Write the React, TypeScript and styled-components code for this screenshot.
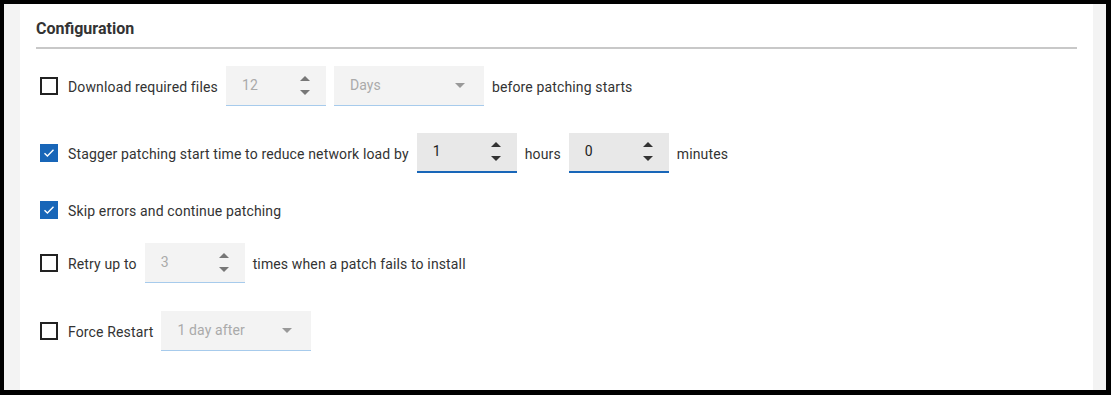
import styled, { createGlobalStyle } from 'styled-components';

const GlobalStyle = createGlobalStyle`
  html, body {
    margin: 0;
    padding: 0;
    background: #000;
  }
  body {
    font-family: Roboto, "Liberation Sans", Arial, sans-serif;
    color: #333;
  }
`;

const StyledFrame = styled.div`
  margin: 4px 5px 5px 4px;
  height: 386px;
  background: #f3f3f3;
  padding: 0 13px 0 16px;
  box-sizing: border-box;
`;

const StyledCard = styled.div`
  height: 100%;
  background: #fff;
  padding: 14px 16px 0 16px;
  box-sizing: border-box;
`;

const StyledTitle = styled.h2`
  margin: 0;
  font-size: 16px;
  line-height: 22px;
  font-weight: 700;
  color: #333;
  padding-bottom: 7px;
  border-bottom: 2px solid #c8c8c8;
`;

const StyledList = styled.div`
  display: flex;
  flex-direction: column;
  padding-left: 4px;
`;

const StyledRow = styled.div<{ $top: number; $height: number }>`
  display: flex;
  align-items: center;
  gap: 8px;
  margin-top: ${(p) => p.$top}px;
  height: ${(p) => p.$height}px;
  font-size: 14px;
  letter-spacing: 0.14px;
  color: #333;
`;

const StyledCheckbox = styled.span<{ $checked: boolean }>`
  width: 18px;
  height: 18px;
  box-sizing: border-box;
  margin-right: 2px;
  flex-shrink: 0;
  display: flex;
  align-items: center;
  justify-content: center;
  border: ${(p) => (p.$checked ? 'none' : '2px solid #222')};
  background: ${(p) => (p.$checked ? '#1866b8' : '#fff')};
`;

const StyledLabel = styled.span`
  white-space: nowrap;
  margin-top: 1px;
`;

const StyledField = styled.div<{ $disabled: boolean; $width: number }>`
  width: ${(p) => p.$width}px;
  height: 40px;
  box-sizing: border-box;
  display: flex;
  align-items: center;
  justify-content: space-between;
  padding: 0 16px;
  background: ${(p) => (p.$disabled ? '#f3f3f3' : '#e8e8e8')};
  border-bottom: ${(p) => (p.$disabled ? '1px solid #a7cbec' : '2px solid #1866b8')};
  color: ${(p) => (p.$disabled ? '#aaa' : '#222')};
  font-size: 14px;
`;

const StyledValue = styled.span`
  margin-top: -2px;
`;

const StyledSpinner = styled.div<{ $disabled: boolean }>`
  display: flex;
  flex-direction: column;
  gap: 9px;
  margin-top: -1px;
  color: ${(p) => (p.$disabled ? '#777' : '#333')};
`;

const StyledArrow = styled.div<{ $disabled: boolean }>`
  margin-right: 3px;
  color: ${(p) => (p.$disabled ? '#999' : '#555')};
`;

const Check = () => (
  <svg width="12" height="10" viewBox="0 0 12 10">
    <path d="M1.5 5.2 L4.4 8 L10.5 1.8" fill="none" stroke="#fff" strokeWidth="1.4" />
  </svg>
);

const Triangle = ({ up }: { up?: boolean }) => (
  <svg width="10" height="5" viewBox="0 0 10 5" style={{ display: 'block' }}>
    <path d={up ? 'M0 5 L5 0 L10 5 Z' : 'M0 0 L5 5 L10 0 Z'} fill="currentColor" />
  </svg>
);

const Checkbox = ({ checked }: { checked: boolean }) => (
  <StyledCheckbox $checked={checked}>{checked && <Check />}</StyledCheckbox>
);

const NumberField = ({ value, disabled }: { value: string; disabled: boolean }) => (
  <StyledField $disabled={disabled} $width={100}>
    <StyledValue>{value}</StyledValue>
    <StyledSpinner $disabled={disabled}>
      <Triangle up />
      <Triangle />
    </StyledSpinner>
  </StyledField>
);

const SelectField = ({ value, disabled }: { value: string; disabled: boolean }) => (
  <StyledField $disabled={disabled} $width={150}>
    <StyledValue>{value}</StyledValue>
    <StyledArrow $disabled={disabled}>
      <Triangle />
    </StyledArrow>
  </StyledField>
);

const App = () => (
  <>
    <GlobalStyle />
    <StyledFrame>
      <StyledCard>
        <StyledTitle>Configuration</StyledTitle>
        <StyledList>
          <StyledRow $top={17} $height={40}>
            <Checkbox checked={false} />
            <StyledLabel>Download required files</StyledLabel>
            <NumberField value="12" disabled />
            <SelectField value="Days" disabled />
            <StyledLabel>before patching starts</StyledLabel>
          </StyledRow>
          <StyledRow $top={27} $height={40}>
            <Checkbox checked />
            <StyledLabel>Stagger patching start time to reduce network load by</StyledLabel>
            <NumberField value="1" disabled={false} />
            <StyledLabel>hours</StyledLabel>
            <NumberField value="0" disabled={false} />
            <StyledLabel>minutes</StyledLabel>
          </StyledRow>
          <StyledRow $top={27} $height={20}>
            <Checkbox checked />
            <StyledLabel>Skip errors and continue patching</StyledLabel>
          </StyledRow>
          <StyledRow $top={23} $height={40}>
            <Checkbox checked={false} />
            <StyledLabel>Retry up to</StyledLabel>
            <NumberField value="3" disabled />
            <StyledLabel>times when a patch fails to install</StyledLabel>
          </StyledRow>
          <StyledRow $top={28} $height={40}>
            <Checkbox checked={false} />
            <StyledLabel>Force Restart</StyledLabel>
            <SelectField value="1 day after" disabled />
          </StyledRow>
        </StyledList>
      </StyledCard>
    </StyledFrame>
  </>
);

export default App;
